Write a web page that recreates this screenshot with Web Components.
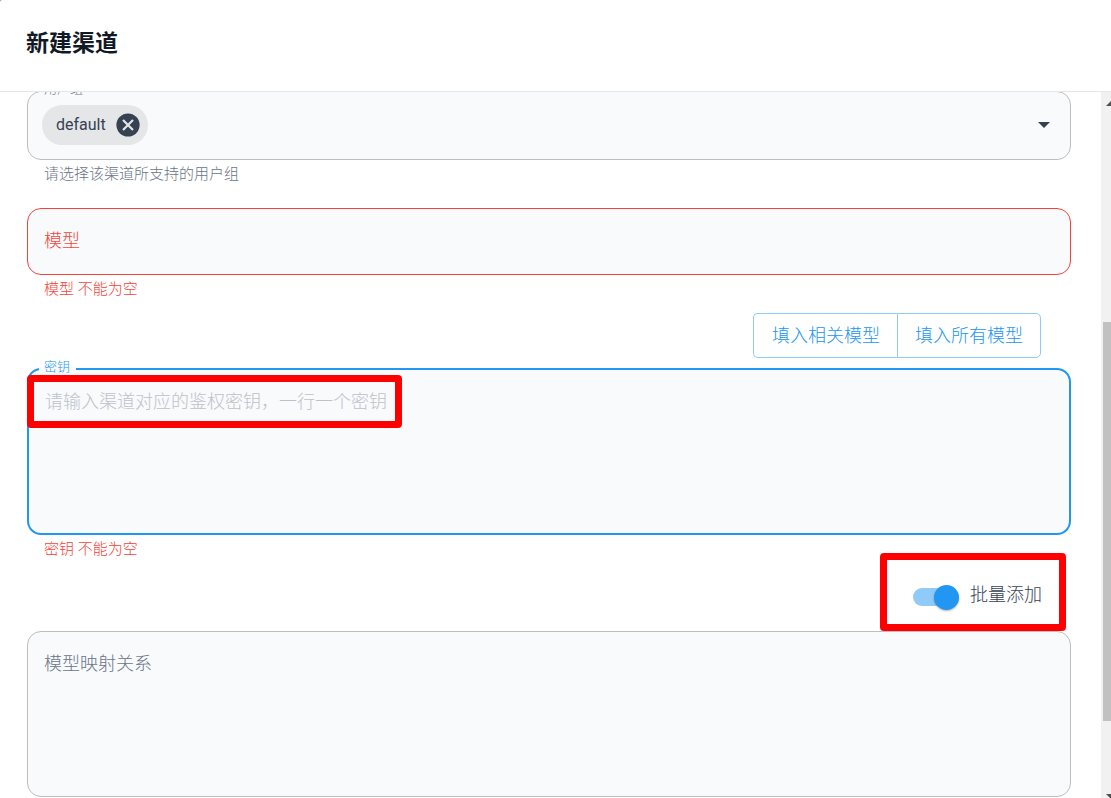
<!DOCTYPE html>
<html lang="zh-CN">
<head>
<meta charset="utf-8">
<meta name="viewport" content="width=device-width, initial-scale=1">
<title>新建渠道</title>
<style>
  html { background: #8a8a8a; }
  body {
    margin: 0;
    font-family: Roboto, "Noto Sans CJK SC", sans-serif;
    font-weight: 300;
    color: #364152;
    --primary: #2196f3;
    --primary-light: #90caf9;
    --error: #f44336;
    --muted: #697586;
    --outline: #bdbdbd;
    --fill: #f8fafc;
    --title: #121926;
  }
</style>
</head>
<body>
<channel-dialog></channel-dialog>
<script>
class BaseElement extends HTMLElement {
  connectedCallback() {
    if (this.shadowRoot) return;
    this.attachShadow({ mode: 'open' }).innerHTML = this.render();
  }
  attr(name) { return this.getAttribute(name) || ''; }
}

const fieldStyle = `
  :host { display: block; }
  * { box-sizing: border-box; }
  .box { position: relative; border: 1px solid var(--outline); border-radius: 14px; background: var(--fill); }
  input, textarea { display: block; width: 100%; margin: 0; padding: 0; border: 0; outline: 0; background: none; resize: none;
    font: inherit; font-size: 18px; line-height: 26px; color: inherit; }
  .helper { margin: 4px 0 0 17px; font-size: 15px; line-height: 20px; color: var(--muted); }
  .helper.error { color: var(--error); }
  .notch { position: absolute; top: -11px; left: 11px; padding: 0 6px 0 5px; font-size: 13px; line-height: 20px;
    background: linear-gradient(#fff 50%, var(--fill) 50%); color: var(--muted); }
`;

customElements.define('group-select', class extends BaseElement {
  render() {
    return `<style>${fieldStyle}
      .box { display: flex; align-items: center; padding: 13px 13px 14px 14px; }
      input { flex: 1; min-width: 0; }
      .notch { top: -13px; }
      .arrow { display: grid; place-items: center; width: 26px; height: 26px; padding: 0; border: 0; background: none; color: inherit; }
    </style>
    <div class="box">
      <label class="notch" for="group">用户组</label>
      <slot></slot>
      <input id="group" type="text" role="combobox" aria-expanded="false">
      <button class="arrow" type="button" aria-label="展开"><svg width="12" height="6" viewBox="0 0 12 6"><path d="M0 0h12L6 6z" fill="currentColor"/></svg></button>
    </div>
    <div class="helper">请选择该渠道所支持的用户组</div>`;
  }
});

customElements.define('tag-chip', class extends BaseElement {
  render() {
    return `<style>
      :host { display: inline-flex; align-items: center; gap: 10px; height: 40px; padding: 0 8px 0 14px; border-radius: 20px;
        box-sizing: border-box; background: #e4e6e8; font-size: 16px; line-height: 24px; font-weight: 400; }
      button { width: 24px; height: 24px; padding: 0; border: 0; background: none; color: inherit; }
      svg { display: block; }
    </style>
    <slot></slot>
    <button type="button" aria-label="删除"><svg width="24" height="24" viewBox="0 0 24 24"><circle cx="12" cy="12" r="11.6" fill="currentColor"/><path d="M7 7l10 10M17 7L7 17" stroke="#e4e6e8" stroke-width="2.2"/></svg></button>`;
  }
});

customElements.define('text-field', class extends BaseElement {
  render() {
    return `<style>${fieldStyle}
      .box { padding: 19px 16px 20px; border-color: var(--error); }
      input::placeholder { color: var(--error); opacity: 1; }
    </style>
    <div class="box"><input type="text" aria-label="${this.attr('label')}" placeholder="${this.attr('label')}"></div>
    <div class="helper error">${this.attr('error')}</div>`;
  }
});

customElements.define('text-area', class extends BaseElement {
  render() {
    const hint = this.attr('hint'), label = this.attr('label'), error = this.attr('error');
    return `<style>${fieldStyle}
      .box { padding: 19px 16px; }
      textarea { height: 126px; }
      textarea::placeholder { color: var(--muted); opacity: 1; }
      :host([hint]) .box { border: 2px solid var(--primary); }
      :host([hint]) textarea { height: 125px; }
      :host([hint]) textarea::placeholder { color: #bcc2ca; }
      :host([hint]) .notch { top: -13px; left: 10px; color: var(--primary); }
    </style>
    <div class="box">
      ${hint ? `<label class="notch" for="area">${label}</label>` : ''}
      <textarea id="area" aria-label="${label}" placeholder="${hint || label}"></textarea>
      <slot></slot>
    </div>
    ${error ? `<div class="helper error">${error}</div>` : ''}`;
  }
});

customElements.define('button-group', class extends BaseElement {
  render() {
    return `<style>
      :host { display: flex; justify-content: flex-end; }
      button { height: 45px; padding: 0 17px; border: 1px solid var(--primary-light); background: none; color: var(--primary);
        font: inherit; font-size: 18px; line-height: 26px; }
      button:first-of-type { padding-left: 18px; border-right: 0; border-radius: 5px 0 0 5px; }
      button:last-of-type { border-radius: 0 5px 5px 0; }
    </style>
    <button type="button">填入相关模型</button><button type="button">填入所有模型</button>`;
  }
});

customElements.define('toggle-switch', class extends BaseElement {
  render() {
    return `<style>
      :host { display: inline-block; }
      label { display: flex; align-items: center; gap: 11px; font-size: 18px; line-height: 26px; }
      input { appearance: none; display: flex; align-items: center; justify-content: flex-end; position: relative;
        width: 46px; height: 26px; margin: 4px 0 0; }
      input::before { content: ""; position: absolute; left: 0; top: 4px; width: 42px; height: 18px; border-radius: 9px; background: var(--primary-light); }
      input::after { content: ""; position: relative; width: 25px; height: 25px; border-radius: 50%; background: var(--primary);
        box-shadow: 0 1px 2px rgba(0,0,0,.3); }
    </style>
    <label><input type="checkbox" role="switch" checked><span><slot></slot></span></label>`;
  }
});

customElements.define('mark-frame', class extends BaseElement {
  render() {
    return `<style>:host { position: absolute; box-sizing: border-box; border: 7px solid #f00; border-radius: 4px; pointer-events: none; z-index: 1; }</style>`;
  }
});

customElements.define('scroll-rail', class extends BaseElement {
  render() {
    return `<style>
      :host { display: flex; flex-direction: column; position: relative; overflow: hidden; background: #f1f1f1; }
      .before { flex: 230; } .after { flex: 77; }
      .thumb { flex: 399; margin-left: 2px; background: #c1c1c1; }
      svg { position: absolute; left: 5px; }
      .up { top: 9px; } .down { bottom: -1px; }
    </style>
    <svg class="up" width="10" height="5" viewBox="0 0 10 5"><path d="M0 5L5 0l5 5z" fill="#505050"/></svg>
    <div class="before"></div><div class="thumb"></div><div class="after"></div>
    <svg class="down" width="10" height="5" viewBox="0 0 10 5"><path d="M0 0h10L5 5z" fill="#505050"/></svg>`;
  }
});

customElements.define('channel-dialog', class extends BaseElement {
  render() {
    return `<style>
      :host { display: flex; flex-direction: column; min-height: 100vh; background: #fff; border-top-left-radius: 2px; }
      header { padding: 28px 26px 27px; border-bottom: 1px solid #e3e6ea; }
      h2 { margin: 0; padding-bottom: 4px; font-size: 23px; line-height: 32px; font-weight: 700; color: var(--title); }
      main { flex: 1; display: grid; grid-template-columns: 1fr 10px; overflow: hidden; }
      form { padding: 0 30px 0 27px; margin-top: -1px; min-width: 0; }
      text-field { margin-top: 24px; }
      button-group { margin: 14px 30px 10px 0; }
      .batch { position: relative; display: flex; justify-content: flex-end; align-items: center; height: 72px; padding-right: 29px; }
      .key-mark { top: 5px; left: -2px; width: 375px; height: 53px; }
      .batch-mark { top: -6px; right: 5px; width: 186px; height: 78px; }
    </style>
    <header><h2>新建渠道</h2></header>
    <main>
      <form>
        <group-select><tag-chip>default</tag-chip></group-select>
        <text-field label="模型" error="模型 不能为空"></text-field>
        <button-group></button-group>
        <text-area label="密钥" hint="请输入渠道对应的鉴权密钥，一行一个密钥" error="密钥 不能为空"><mark-frame class="key-mark"></mark-frame></text-area>
        <div class="batch"><toggle-switch>批量添加</toggle-switch><mark-frame class="batch-mark"></mark-frame></div>
        <text-area label="模型映射关系"></text-area>
      </form>
      <scroll-rail></scroll-rail>
    </main>`;
  }
});
</script>
</body>
</html>
